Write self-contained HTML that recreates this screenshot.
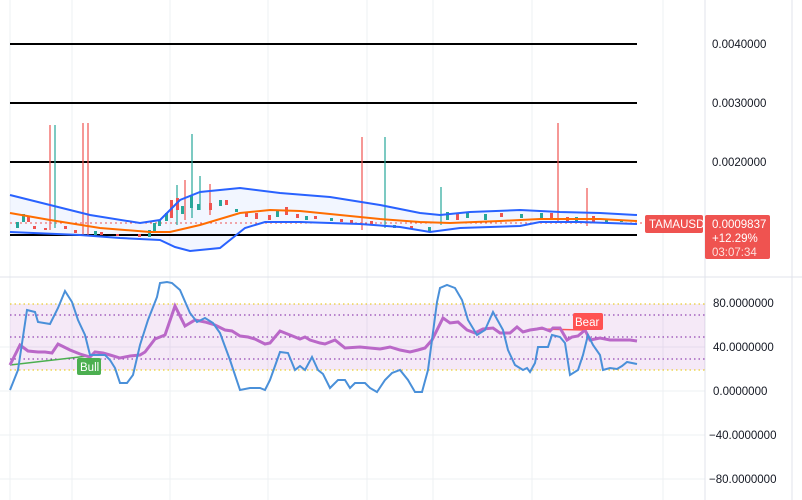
<!DOCTYPE html>
<html><head><meta charset="utf-8"><style>
body{margin:0;background:#fff;width:802px;height:500px;overflow:hidden;font-family:"Liberation Sans",sans-serif}
svg{position:absolute;left:0;top:0}
.ax{font-size:11.5px;fill:#131722}
</style></head><body>
<svg width="802" height="500" viewBox="0 0 802 500">
<g stroke="#eef0f3" stroke-width="1">
<line x1="10" y1="0" x2="10" y2="500"/><line x1="72" y1="0" x2="72" y2="500"/><line x1="170" y1="0" x2="170" y2="500"/><line x1="268" y1="0" x2="268" y2="500"/><line x1="367" y1="0" x2="367" y2="500"/><line x1="433" y1="0" x2="433" y2="500"/><line x1="532" y1="0" x2="532" y2="500"/><line x1="663" y1="0" x2="663" y2="500"/>
<line x1="0" y1="347" x2="705" y2="347"/><line x1="0" y1="391" x2="705" y2="391"/><line x1="0" y1="435" x2="705" y2="435"/><line x1="0" y1="479" x2="705" y2="479"/>
</g>
<line x1="0" y1="277" x2="802" y2="277" stroke="#e0e3eb"/>
<line x1="705" y1="0" x2="705" y2="500" stroke="#e0e3eb"/>
<line x1="792" y1="0" x2="792" y2="500" stroke="#e0e3eb"/>
<!-- BB fill -->
<polygon fill="#2962ff" fill-opacity="0.06" points="10,195 90,215 140,223 160,220 180,200 200,192 240,188 280,193 330,197 380,205 420,213 440,215 470,212 520,210 560,212 600,213 637,215 637,224 580,222 540,222 520,226 460,228 430,232 400,227 360,224 300,222 265,222 245,228 220,248 190,251 175,247 160,240 120,238 80,235 10,232"/>
<g stroke="#000" stroke-width="2"><line x1="10" y1="44" x2="637" y2="44"/><line x1="10" y1="103" x2="637" y2="103"/><line x1="10" y1="162" x2="637" y2="162"/><line x1="10" y1="235" x2="637" y2="235"/></g>
<line x1="10" y1="223" x2="705" y2="223" stroke="#ef5350" stroke-dasharray="2,3"/>
<!-- spikes -->
<g stroke-width="1.2">
<line x1="50" y1="125" x2="50" y2="230" stroke="#ef5350"/><line x1="55" y1="125" x2="55" y2="228" stroke="#26a69a"/>
<line x1="83" y1="123" x2="83" y2="236" stroke="#ef5350"/><line x1="88" y1="123" x2="88" y2="236" stroke="#ef5350"/>
<line x1="192" y1="134" x2="192" y2="218" stroke="#26a69a"/><line x1="362" y1="137" x2="362" y2="230" stroke="#ef5350"/>
<line x1="385" y1="137" x2="385" y2="228" stroke="#26a69a"/><line x1="441" y1="187" x2="441" y2="225" stroke="#26a69a"/>
<line x1="558" y1="123" x2="558" y2="222" stroke="#ef5350"/><line x1="587" y1="188" x2="587" y2="226" stroke="#ef5350"/>
<line x1="177" y1="185" x2="177" y2="225" stroke="#26a69a"/><line x1="200" y1="176" x2="200" y2="210" stroke="#26a69a"/><line x1="210" y1="184" x2="210" y2="215" stroke="#ef5350"/><line x1="185" y1="180" x2="185" y2="220" stroke="#ef5350"/>
</g>
<g>
<rect x="16" y="222" width="3" height="6" fill="#26a69a"/><rect x="22" y="214" width="3" height="8" fill="#26a69a"/><rect x="27" y="216" width="3" height="6" fill="#ef5350"/><rect x="33" y="226" width="3" height="3" fill="#ef5350"/><rect x="44" y="228" width="3" height="2" fill="#ef5350"/><rect x="64" y="226" width="3" height="3" fill="#ef5350"/><rect x="74" y="230" width="3" height="3" fill="#ef5350"/><rect x="94" y="231" width="3" height="4" fill="#26a69a"/><rect x="100" y="232" width="3" height="3" fill="#ef5350"/><rect x="116" y="234" width="3" height="2" fill="#ef5350"/><rect x="138" y="234" width="3" height="3" fill="#ef5350"/><rect x="148" y="230" width="3" height="7" fill="#26a69a"/><rect x="153" y="223" width="3" height="8" fill="#26a69a"/><rect x="158" y="220" width="3" height="6" fill="#26a69a"/><rect x="165" y="213" width="3" height="8" fill="#26a69a"/><rect x="170" y="200" width="3" height="18" fill="#ef5350"/><rect x="176" y="198" width="3" height="12" fill="#ef5350"/><rect x="181" y="206" width="3" height="8" fill="#26a69a"/><rect x="190" y="196" width="3" height="12" fill="#26a69a"/><rect x="197" y="204" width="3" height="6" fill="#26a69a"/><rect x="209" y="203" width="3" height="7" fill="#ef5350"/><rect x="219" y="200" width="3" height="6" fill="#26a69a"/><rect x="225" y="200" width="3" height="5" fill="#ef5350"/><rect x="235" y="209" width="3" height="3" fill="#26a69a"/><rect x="245" y="212" width="3" height="5" fill="#ef5350"/><rect x="255" y="213" width="3" height="6" fill="#ef5350"/><rect x="268" y="215" width="3" height="5" fill="#ef5350"/><rect x="276" y="211" width="3" height="6" fill="#26a69a"/><rect x="285" y="207" width="3" height="8" fill="#ef5350"/><rect x="296" y="214" width="3" height="4" fill="#ef5350"/><rect x="305" y="216" width="3" height="4" fill="#26a69a"/><rect x="314" y="216" width="3" height="3" fill="#ef5350"/><rect x="330" y="218" width="3" height="3" fill="#26a69a"/><rect x="340" y="219" width="3" height="3" fill="#ef5350"/><rect x="350" y="220" width="3" height="3" fill="#ef5350"/><rect x="370" y="221" width="3" height="4" fill="#ef5350"/><rect x="393" y="225" width="3" height="3" fill="#26a69a"/><rect x="410" y="226" width="3" height="3" fill="#ef5350"/><rect x="428" y="227" width="3" height="4" fill="#26a69a"/><rect x="446" y="212" width="3" height="8" fill="#26a69a"/><rect x="456" y="214" width="3" height="6" fill="#ef5350"/><rect x="466" y="213" width="3" height="5" fill="#26a69a"/><rect x="484" y="214" width="3" height="6" fill="#26a69a"/><rect x="500" y="213" width="3" height="4" fill="#ef5350"/><rect x="520" y="214" width="3" height="4" fill="#26a69a"/><rect x="540" y="213" width="3" height="6" fill="#26a69a"/><rect x="550" y="213" width="3" height="5" fill="#ef5350"/><rect x="566" y="217" width="3" height="4" fill="#ef5350"/><rect x="575" y="217" width="3" height="5" fill="#26a69a"/><rect x="592" y="216" width="3" height="6" fill="#ef5350"/><rect x="605" y="220" width="3" height="2" fill="#26a69a"/><rect x="620" y="220" width="3" height="2" fill="#26a69a"/>
</g>
<polyline fill="none" stroke="#2962ff" stroke-width="2" points="10,195 90,215 140,223 160,220 180,200 200,192 240,188 280,193 330,197 380,205 420,213 440,215 470,212 520,210 560,212 600,213 637,215"/>
<polyline fill="none" stroke="#2962ff" stroke-width="2" points="10,232 80,235 120,238 160,240 175,247 190,251 220,248 245,228 265,222 300,222 360,224 400,227 430,232 460,228 520,226 540,222 580,222 637,224"/>
<polyline fill="none" stroke="#ff6d00" stroke-width="2" points="10,213 50,220 100,228 150,232 170,232 200,225 240,213 270,210 300,211 340,215 380,219 420,222 450,223 500,221 540,219 600,219 637,221"/>
<g class="ax"><text x="712" y="48">0.0040000</text><text x="712" y="107">0.0030000</text><text x="712" y="166">0.0020000</text></g>
<rect x="645" y="215" width="58" height="18" rx="2" fill="#ef5350"/>
<text x="649" y="228" font-size="11.5" fill="#fff">TAMAUSD</text>
<rect x="705" y="215" width="65" height="44" rx="2" fill="#ef5350"/>
<text x="712" y="228" font-size="11.5" fill="#fff">0.0009837</text><text x="712" y="242" font-size="11.5" fill="#fff">+12.29%</text><text x="712" y="256" font-size="11.5" fill="#fde0dc">03:07:34</text>
<!-- RSI -->
<rect x="10" y="304" width="695" height="66" fill="#9c27b0" fill-opacity="0.1"/>
<g stroke-dasharray="1.5,3" stroke-width="1"><line x1="10" y1="304" x2="705" y2="304" stroke="#e6c300"/><line x1="10" y1="370" x2="705" y2="370" stroke="#e6c300"/><line x1="10" y1="315" x2="705" y2="315" stroke="#7b1fa2"/><line x1="10" y1="337" x2="705" y2="337" stroke="#7b1fa2"/><line x1="10" y1="359" x2="705" y2="359" stroke="#7b1fa2"/></g>
<polyline fill="none" stroke="#4caf50" stroke-width="1.5" points="10,365 88,356"/>
<polyline fill="none" stroke="#ff5252" stroke-width="1.5" points="537,329 585,330"/>
<polyline fill="none" stroke="#ba68c8" stroke-width="3" points="10,365 20,345 28,351 38,352 45,352 52,353 58,344 64,347 70,350 80,354 90,357 95,352 103,353 110,355 120,358 130,356 140,355 145,352 155,339 165,335 175,306 185,326 195,320 205,322 215,325 225,330 232,331 240,336 248,337 255,339 265,344 270,343 280,331 290,335 300,339 305,337 310,340 320,343 325,344 335,340 345,348 360,347 380,349 390,347 400,350 410,352 418,350 425,348 432,340 443,318 450,323 458,322 467,330 475,333 483,329 493,328 500,333 510,333 517,327 523,332 530,330 537,329 542,328 550,331 553,328 560,328 567,340 572,337 578,336 585,330 590,340 600,338 610,340 620,340 630,340 637,341"/>
<polyline fill="none" stroke="#4a90d9" stroke-width="2" points="10,390 18,370 27,310 35,312 38,322 50,324 58,308 65,291 72,302 78,320 85,335 90,355 97,355 105,355 110,360 115,368 120,383 127,383 133,375 140,345 148,320 157,297 160,283 167,282 172,283 180,290 190,313 197,322 205,318 213,323 220,333 230,360 240,390 250,388 260,388 265,390 270,380 280,352 288,353 295,370 300,366 305,370 312,357 318,370 323,374 330,388 338,380 345,380 350,388 355,383 365,383 370,388 377,392 385,380 392,373 400,370 408,380 415,392 422,392 428,370 437,302 440,288 447,285 455,288 462,300 468,320 477,335 485,330 493,312 503,330 508,350 515,365 523,370 527,368 530,372 535,363 538,347 548,347 552,335 560,337 565,343 570,375 578,370 583,355 588,335 593,345 600,355 603,370 610,368 617,369 622,366 627,362 632,363 637,364"/>
<rect x="77" y="358" width="24" height="17" rx="2" fill="#4caf50"/><text x="80" y="371" font-size="11.5" fill="#fff">Bull</text>
<rect x="573" y="313" width="30" height="17" rx="2" fill="#ff5252"/><text x="575" y="326" font-size="11.5" fill="#fff">Bear</text>
<g class="ax"><text x="713" y="307">80.0000000</text><text x="713" y="351">40.0000000</text><text x="713" y="395">0.0000000</text><text x="709" y="439">−40.0000000</text><text x="709" y="483">−80.0000000</text></g>
</svg>
</body></html>
